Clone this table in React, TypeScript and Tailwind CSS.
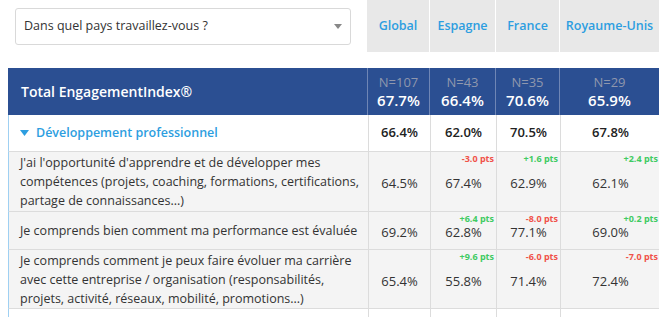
import React from "react";

const cols = "grid grid-cols-[359px_62px_66px_64px_100px]";

const header = [
  { n: "N=107", v: "67.7%" },
  { n: "N=43", v: "66.4%" },
  { n: "N=35", v: "70.6%" },
  { n: "N=29", v: "65.9%" },
];

type Cell = { v: string; d?: string; up?: boolean };

const rows: { label: string[]; h: string; cells: Cell[] }[] = [
  {
    label: [
      "J'ai l'opportunité d'apprendre et de développer mes",
      "compétences (projets, coaching, formations, certifications,",
      "partage de connaissances...)",
    ],
    h: "h-[60px]",
    cells: [
      { v: "64.5%" },
      { v: "67.4%", d: "-3.0 pts", up: false },
      { v: "62.9%", d: "+1.6 pts", up: true },
      { v: "62.1%", d: "+2.4 pts", up: true },
    ],
  },
  {
    label: ["Je comprends bien comment ma performance est évaluée"],
    h: "h-[38px]",
    cells: [
      { v: "69.2%" },
      { v: "62.8%", d: "+6.4 pts", up: true },
      { v: "77.1%", d: "-8.0 pts", up: false },
      { v: "69.0%", d: "+0.2 pts", up: true },
    ],
  },
  {
    label: [
      "Je comprends comment je peux faire évoluer ma carrière",
      "avec cette entreprise / organisation (responsabilités,",
      "projets, activité, réseaux, mobilité, promotions...)",
    ],
    h: "h-[59px]",
    cells: [
      { v: "65.4%" },
      { v: "55.8%", d: "+9.6 pts", up: true },
      { v: "71.4%", d: "-6.0 pts", up: false },
      { v: "72.4%", d: "-7.0 pts", up: false },
    ],
  },
];

export default function App() {
  return (
    <div className="w-[670px] h-[317px] overflow-hidden bg-white font-['Open_Sans',sans-serif] text-[#333]">
      <div className="flex items-start">
        <div className="ml-[15px] mt-[8px] w-[336px] h-[37px] border border-[#d9d9d9] rounded-[3px] flex items-center justify-between pl-[8px] pr-[8px] text-[12.5px] text-[#333]">
          <span>Dans quel pays travaillez-vous ?</span>
          <svg width="8" height="5" viewBox="0 0 8 5">
            <path d="M0 0h8L4 5z" fill="#888" />
          </svg>
        </div>
        <div className="ml-[16px] flex h-[52px] text-[12.5px] font-semibold text-[#2d9ee0]">
          <div className="w-[62px] bg-[#e8e8e8] flex items-center justify-center">Global</div>
          <div className="w-[66px] bg-[#e8e8e8] border-l border-white flex items-center justify-center">Espagne</div>
          <div className="w-[64px] bg-[#e8e8e8] border-l border-white flex items-center justify-center">France</div>
          <div className="w-[100px] bg-[#e8e8e8] border-l border-white flex items-center justify-center">Royaume-Unis</div>
        </div>
      </div>

      <div className="ml-[8px] mt-[16px] w-[651px]">
        <div className={`${cols} h-[47px] bg-[#2b4f92]`}>
          <div className="flex items-center pl-[13px] text-[14px] font-semibold text-white">
            Total EngagementIndex®
          </div>
          {header.map((h, i) => (
            <div
              key={i}
              className="border-l border-[#6f86b5] flex flex-col items-center justify-center gap-[3px]"
            >
              <span className="text-[13px] leading-[14px] text-[#8f97ad]">{h.n}</span>
              <span className="text-[15px] leading-[16px] font-semibold text-white">{h.v}</span>
            </div>
          ))}
        </div>

        <div className={`${cols} h-[37px] bg-white border-l border-[#9fd0f2] border-b border-b-[#dcdcdc]`}>
          <div className="flex items-center pl-[11px] text-[12.5px] font-semibold text-[#2d9ee0]">
            <svg width="9" height="6" viewBox="0 0 9 6" className="mr-[7px]">
              <path d="M0 0h9L4.5 6z" fill="#2d9ee0" />
            </svg>
            Développement professionnel
          </div>
          {["66.4%", "62.0%", "70.5%", "67.8%"].map((v, i) => (
            <div
              key={i}
              className="border-l border-[#dcdcdc] flex items-center justify-center text-[13px] font-semibold text-[#222]"
            >
              {v}
            </div>
          ))}
        </div>

        {rows.map((r, ri) => (
          <div
            key={ri}
            className={`${cols} ${r.h} bg-[#f4f4f4] border-l border-[#9fd0f2] border-b border-b-[#dcdcdc]`}
          >
            <div className="flex flex-col justify-center pl-[11px] text-[12.5px] leading-[19px] text-[#333]">
              {r.label.map((l, li) => (
                <span key={li}>{l}</span>
              ))}
            </div>
            {r.cells.map((c, ci) => (
              <div
                key={ci}
                className="relative border-l border-[#dcdcdc] flex items-center justify-center text-[13px] text-[#333]"
              >
                {c.d && (
                  <span
                    className={`absolute top-[2px] right-[2px] text-[9px] font-bold leading-[10px] ${
                      c.up ? "text-[#3fcb62]" : "text-[#f0524a]"
                    }`}
                  >
                    {c.d}
                  </span>
                )}
                <span className="mt-[3px] leading-[14px]">{c.v}</span>
              </div>
            ))}
          </div>
        ))}
        <div className={`${cols} h-[10px] bg-white border-l border-[#9fd0f2]`}>
          <div />
          <div className="border-l border-[#dcdcdc]" />
          <div className="border-l border-[#dcdcdc]" />
          <div className="border-l border-[#dcdcdc]" />
          <div className="border-l border-[#dcdcdc]" />
        </div>
      </div>
    </div>
  );
}
